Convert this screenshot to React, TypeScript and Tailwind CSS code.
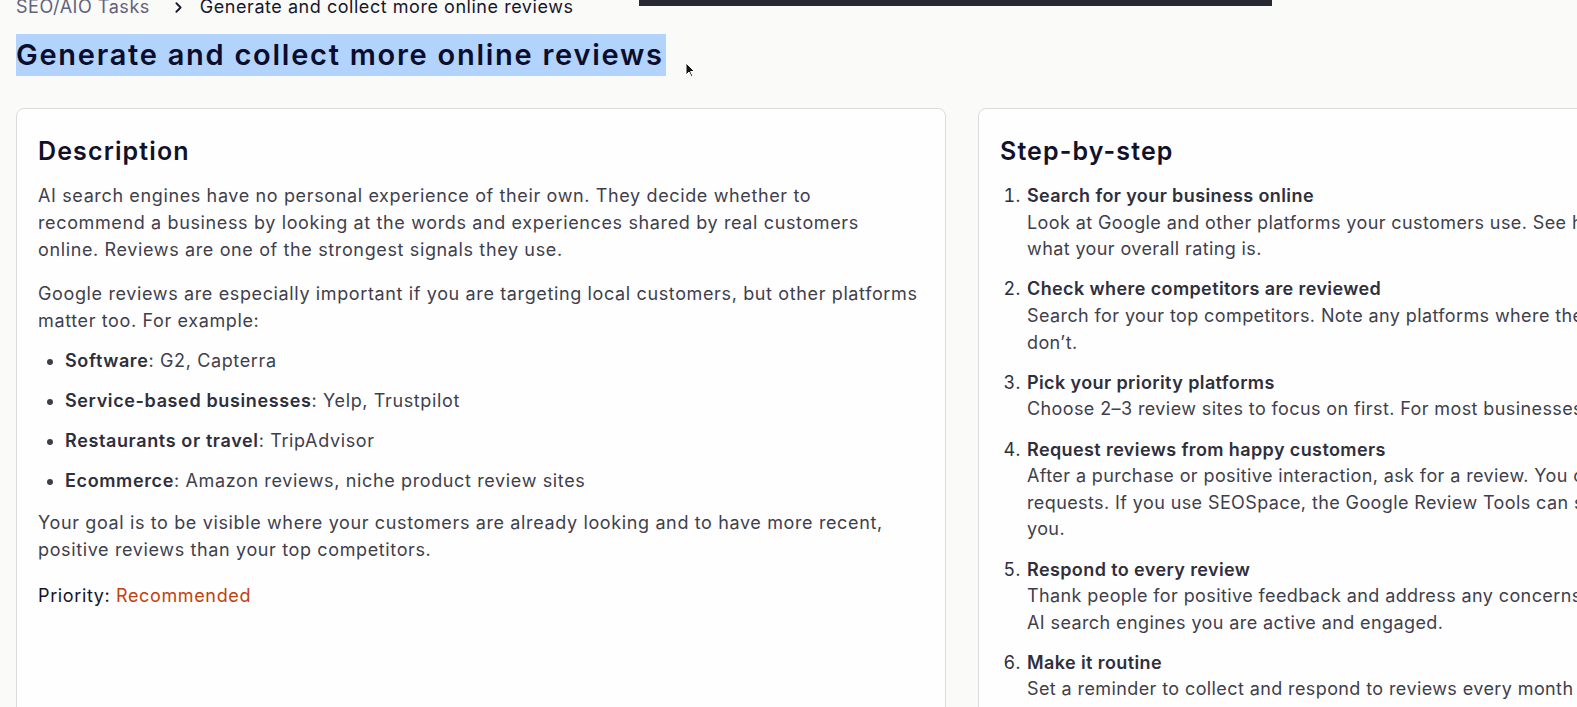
import { ChevronRight } from "lucide-react";

const font = { fontFamily: "Inter, 'Noto Sans', sans-serif" };

type Step = { title: string; lines: string[] };

// line breaks follow the card width in the reference; the card runs past the window edge
const steps: Step[] = [
  {
    title: "Search for your business online",
    lines: ["Look at Google and other platforms your customers use. See how many reviews you have and", "what your overall rating is."],
  },
  {
    title: "Check where competitors are reviewed",
    lines: ["Search for your top competitors. Note any platforms where they have reviews and you", "don\u2019t."],
  },
  {
    title: "Pick your priority platforms",
    lines: ["Choose 2\u20133 review sites to focus on first. For most businesses, Google should be one of them."],
  },
  {
    title: "Request reviews from happy customers",
    lines: [
      "After a purchase or positive interaction, ask for a review. You can use email, SMS or in-person",
      "requests. If you use SEOSpace, the Google Review Tools can send these requests for",
      "you.",
    ],
  },
  {
    title: "Respond to every review",
    lines: ["Thank people for positive feedback and address any concerns politely. This shows customers and", "AI search engines you are active and engaged."],
  },
  {
    title: "Make it routine",
    lines: ["Set a reminder to collect and respond to reviews every month so your profile stays fresh."],
  },
];

const examples = [
  ["Software", "G2, Capterra"],
  ["Service-based businesses", "Yelp, Trustpilot"],
  ["Restaurants or travel", "TripAdvisor"],
  ["Ecommerce", "Amazon reviews, niche product review sites"],
];

function Card(props: { title: string; children: React.ReactNode }) {
  return (
    <div className="h-[640px] overflow-hidden rounded-lg border border-[#dcdcdc] bg-[#fefefe] px-[21px] pt-[26px]">
      <h2 className="mb-[14px] text-[25px] font-semibold leading-[32px] tracking-[0.045em] text-[#11112a]">{props.title}</h2>
      {props.children}
    </div>
  );
}

export default function App() {
  return (
    <div className="relative h-[707px] w-[1577px] overflow-hidden bg-[#fafaf9]" style={font}>
      <div className="mt-[-6px] w-[1924px] px-4">
        <nav className="flex h-[26px] items-center text-[18px] leading-[26px] tracking-[0.03em]">
          <span className="text-[#62627a]">SEO/AIO Tasks</span>
          <ChevronRight className="ml-[20px] mr-[13px] h-[17px] w-[17px] text-[#1a1a2e]" strokeWidth={2.6} />
          <span className="text-[#16162b]">Generate and collect more online reviews</span>
        </nav>
        <h1 className="mt-[14px] text-[29px] font-semibold leading-[42px] tracking-[0.06em] text-[#0c0c2c]">
          <span className="inline-block h-[42px] bg-[#b2d3fb] pr-[2px]">Generate and collect more online reviews</span>
        </h1>
        <div className="mt-[32px] grid grid-cols-[930px_930px] gap-8">
          <Card title="Description">
            <div className="whitespace-nowrap text-[18px] leading-[27px] tracking-[0.035em] text-[#3f3f4c]">
              <p className="mb-[17px] pt-[1px]">
                AI search engines have no personal experience of their own. They decide whether to
                <br />
                recommend a business by looking at the words and experiences shared by real customers
                <br />
                online. Reviews are one of the strongest signals they use.
              </p>
              <p>
                Google reviews are especially important if you are targeting local customers, but other platforms
                <br />
                matter too. For example:
              </p>
              <ul className="mb-[15px] mt-[13px] list-disc pl-[27px]">
                {examples.map(([k, v]) => (
                  <li key={k} className="mb-[13px] last:mb-0">
                    <span className="font-semibold text-[#2f2f3c]">{k}</span>: {v}
                  </li>
                ))}
              </ul>
              <p>
                Your goal is to be visible where your customers are already looking and to have more recent,
                <br />
                positive reviews than your top competitors.
              </p>
              <p className="mt-[19px] text-[#14142a]">
                Priority: <span className="text-[#c2410c]">Recommended</span>
              </p>
            </div>
          </Card>
          <Card title="Step-by-step">
            <ol className="list-decimal whitespace-nowrap pl-[26px] pt-[2px] text-[18px] leading-[26.6px] tracking-[0.022em] text-[#3f3f4c] marker:text-[#2f2f3c]">
              {steps.map((s) => (
                <li key={s.title} className="mb-[13.6px] pl-[1px]">
                  <div className="font-semibold text-[#2f2f3c]">{s.title}</div>
                  {s.lines.map((l) => (
                    <div key={l}>{l}</div>
                  ))}
                </li>
              ))}
            </ol>
          </Card>
        </div>
      </div>
      <div className="absolute left-[639px] top-0 h-[6px] w-[633px] bg-[#272a33]" />
      <svg className="absolute left-[685px] top-[62px]" width="11" height="16" viewBox="0 0 11 16">
        <path d="M1 1 L1 13 L4 10 L6.5 15 L8 14.3 L5.6 9.5 L9.5 9.5 Z" fill="#111" stroke="#fff" strokeWidth="1" />
      </svg>
    </div>
  );
}
